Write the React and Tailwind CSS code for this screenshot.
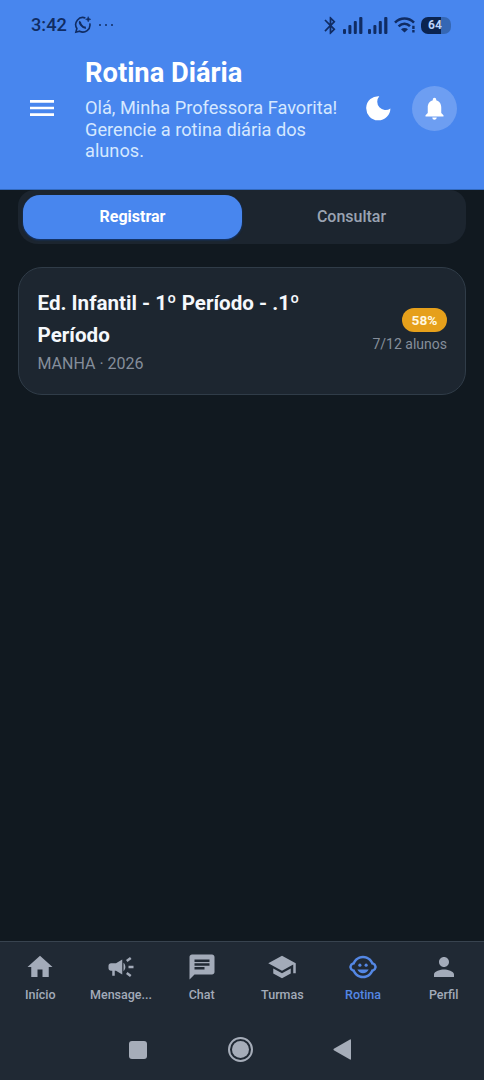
import {
  MdBluetooth,
  MdCampaign,
  MdChat,
  MdChildCare,
  MdHome,
  MdMenu,
  MdNotifications,
  MdPerson,
  MdSchool,
} from 'react-icons/md'

const navItems = [
  { label: 'Início', icon: MdHome },
  { label: 'Mensage...', icon: MdCampaign },
  { label: 'Chat', icon: MdChat },
  { label: 'Turmas', icon: MdSchool },
  { label: 'Rotina', icon: MdChildCare, active: true },
  { label: 'Perfil', icon: MdPerson },
]

function WhatsappIcon() {
  return (
    <svg width="18" height="18" viewBox="0 0 18 18" fill="none" stroke="currentColor" strokeWidth="1.6">
      <path d="M11.4 2A7.1 7.1 0 0 0 2.9 12.5L1.9 16.2L5.6 15.2A7.1 7.1 0 0 0 15.8 7.4" />
      <path d="M6.2 5.4C5 7.2 8.7 12.2 11.9 11.6" strokeWidth="2.2" />
      <path d="M14.2 0.6L15 2.5L16.9 3.3L15 4.1L14.2 6L13.4 4.1L11.5 3.3L13.4 2.5Z" fill="currentColor" strokeWidth="0.4" />
    </svg>
  )
}

function Signal() {
  return (
    <svg width="20" height="17" viewBox="0 0 20 17" fill="currentColor">
      <rect x="0" y="12" width="3" height="5" rx="1" />
      <rect x="5.4" y="8" width="3" height="9" rx="1" />
      <rect x="10.8" y="4" width="3" height="13" rx="1" />
      <rect x="16.2" y="0" width="3.2" height="17" rx="1" />
    </svg>
  )
}

function Wifi() {
  return (
    <svg width="22" height="16" viewBox="0 0 22 16" fill="none" stroke="currentColor" strokeWidth="2.6">
      <path d="M1 5.6C6.5 0.2 14.5 0.2 20 5.6" />
      <path d="M4.6 9.4C8.2 6 12.8 6 16 9.2" />
      <path d="M7 12.2C9 10.6 12 10.6 14 12.2L10.5 15.6Z" fill="currentColor" stroke="none" />
      <path d="M19.4 8.8V12M19.4 13V15.6" strokeWidth="2.4" />
    </svg>
  )
}

function Moon() {
  return (
    <svg width="25" height="25" viewBox="0 0 25 25" fill="currentColor">
      <path d="M13.3 0.2A8.3 8.3 0 0 0 24.4 12.4A12.1 12.1 0 1 1 13.3 0.2Z" />
    </svg>
  )
}

function StatusBar() {
  return (
    <div className="flex h-[50px] items-center justify-between pl-[31px] pr-[33px] text-[#102c63]">
      <div className="flex items-center gap-[7px]">
        <span className="pt-px text-[18.2px] font-medium leading-none">3:42</span>
        <WhatsappIcon />
        <div className="flex gap-[3.5px]">
          <span className="size-[2.5px] rounded-full bg-[#102c63]" />
          <span className="size-[2.5px] rounded-full bg-[#102c63]" />
          <span className="size-[2.5px] rounded-full bg-[#102c63]" />
        </div>
      </div>
      <div className="flex items-center gap-[5.5px]">
        <MdBluetooth size={21} className="-mr-1" />
        <Signal />
        <Signal />
        <Wifi />
        <div className="flex h-[17px] w-[30px] items-center justify-center rounded-[7px] bg-linear-to-r from-[#0b2450] from-65% to-[#3567b4] to-65% pr-0.5 text-xs font-bold text-[#b9d2fa]">
          64
        </div>
      </div>
    </div>
  )
}

function Header() {
  return (
    <header className="h-[190px] border-b border-[#3269bd] bg-[#4886ee]">
      <StatusBar />
      <div className="flex items-center pl-[26px] pr-[27px] pt-[5px]">
        <MdMenu size={32} className="text-white" />
        <div className="ml-[27px] flex-1 pt-px">
          <h1 className="text-[27.3px] font-bold leading-[34px] text-white">Rotina Diária</h1>
          <p className="mt-[7px] w-[260px] text-[18.2px] leading-[21.5px] text-[#d5e8ff]">
            Olá, Minha Professora Favorita! Gerencie a rotina diária dos alunos.
          </p>
        </div>
        <div className="mr-[21px] text-white">
          <Moon />
        </div>
        <button className="flex size-[45px] items-center justify-center rounded-full bg-[#6d9ef2] text-white">
          <MdNotifications size={27} />
        </button>
      </div>
    </header>
  )
}

function Tabs() {
  return (
    <div className="mx-[18px] flex h-[54px] rounded-b-[20px] rounded-t-[16px] bg-[#1c252f] px-[5px] pb-[5px] pt-[5px] text-base">
      <button className="flex-1 rounded-[17px] bg-[#4886ee] font-bold text-white shadow-[0_1px_2px_#123a7c]">
        Registrar
      </button>
      <button className="flex-1 font-medium text-[#9aa3b2]">Consultar</button>
    </div>
  )
}

function ClassCard() {
  return (
    <div className="mx-[18px] mt-[23px] flex h-[128px] items-center justify-between rounded-[24px] border border-[#303c48] bg-[#1d2630] pl-[18.5px] pr-[18px]">
      <div className="w-[290px]">
        <h2 className="text-[20.6px] font-bold leading-8 text-[#f5f8fc]">
          Ed. Infantil - 1º Período - .1º Período
        </h2>
        <p className="mt-px text-base leading-6 text-[#858e9b]">MANHA · 2026</p>
      </div>
      <div className="flex flex-col items-end">
        <span className="flex h-6 w-[45px] items-center justify-center rounded-full bg-[#e6a01b] text-[13.7px] font-bold text-[#fff8e0]">
          58%
        </span>
        <span className="mt-0.5 text-sm leading-5 text-[#858e9b]">7/12 alunos</span>
      </div>
    </div>
  )
}

function BottomNav() {
  return (
    <nav className="flex h-[78px] border-t border-[#38434f] pt-[10px]">
      {navItems.map(({ label, icon: Icon, active }) => (
        <div
          key={label}
          className={`flex flex-1 flex-col items-center text-[12.5px] font-medium ${
            active ? 'text-[#5487e4]' : 'text-[#a3abb9]'
          }`}
        >
          <Icon size={30} />
          <span className="mt-[3px] leading-5">{label}</span>
        </div>
      ))}
    </nav>
  )
}

function SystemBar() {
  return (
    <div className="flex h-[61px] items-center justify-center gap-[80.5px] pr-1 text-[#a6adb9]">
      <div className="size-[18px] rounded-[3px] bg-[#a6adb9]" />
      <div className="flex size-[25px] items-center justify-center rounded-full border-2 border-[#a6adb9]">
        <div className="size-[17px] rounded-full bg-[#a6adb9]" />
      </div>
      <svg width="18" height="21" viewBox="0 0 18 21" fill="currentColor">
        <path d="M17 0.5Q18 0 18 1.2V19.8Q18 21 17 20.5L0.8 11.2Q0 10.5 0.8 9.8Z" />
      </svg>
    </div>
  )
}

export default function App() {
  return (
    <div className="flex h-[1080px] w-[484px] flex-col overflow-hidden bg-[#111920] font-[Roboto,sans-serif]">
      <Header />
      <main className="flex-1">
        <Tabs />
        <ClassCard />
      </main>
      <footer className="bg-[#202934]">
        <BottomNav />
        <SystemBar />
      </footer>
    </div>
  )
}
